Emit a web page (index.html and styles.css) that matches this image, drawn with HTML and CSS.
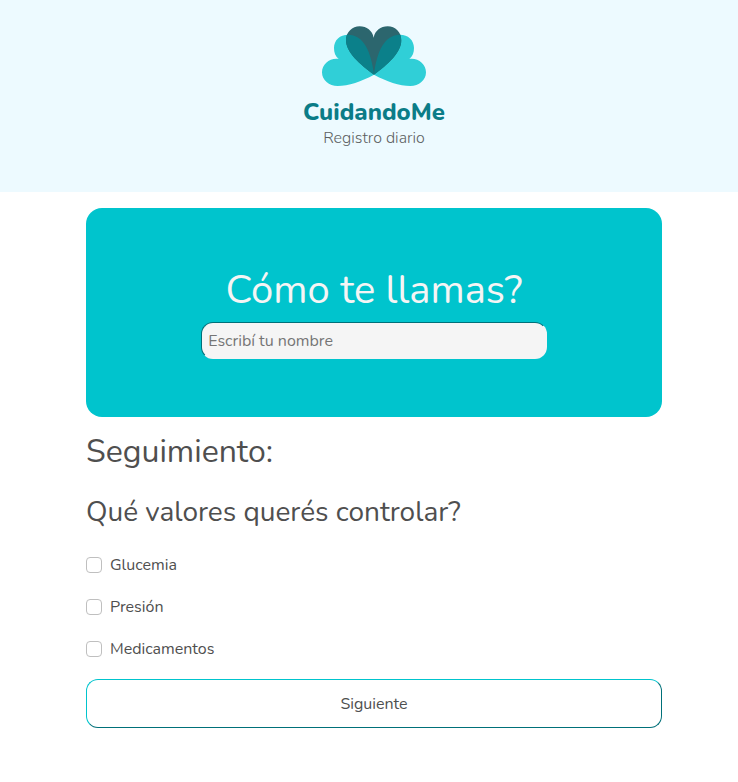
FILE: index.html
```html
<!DOCTYPE html>
<html lang="es">
<head>
  <meta charset="utf-8">
  <meta name="viewport" content="width=device-width, initial-scale=1">
  <title>CuidandoMe</title>
  <link rel="stylesheet" href="styles.css">
</head>
<body>
  <header class="header">
    <svg class="logo" viewBox="-3 0 390 204" aria-hidden="true">
      <defs>
        <path id="heart" d="M192 170C150 140 108 103 108 67C108 42 127 25 149 25C170 25 187 38 191 59C195 38 212 25 233 25C256 25 274 42 274 67C274 103 234 140 192 170Z"/>
        <path id="wing" d="M192 170C155 190 115 204 83 204C57 204 36 187 36 163C36 138 60 119 86 123C76 115 72 104 72 90C72 66 90 50 114 50C160 50 184 100 192 170Z"/>
        <clipPath id="heart-clip"><use href="#heart"/></clipPath>
      </defs>
      <g fill="#30cfd7">
        <use href="#wing"/>
        <use href="#wing" transform="translate(384 0) scale(-1 1)"/>
      </g>
      <use href="#heart" fill="#2c666e"/>
      <g fill="#0b808a" clip-path="url(#heart-clip)">
        <use href="#wing"/>
        <use href="#wing" transform="translate(384 0) scale(-1 1)"/>
      </g>
    </svg>
    <p class="brand">CuidandoMe</p>
    <p class="tagline">Registro diario</p>
  </header>
  <main>
    <form class="form">
      <section class="card">
        <label class="card-title" for="nombre">Cómo te llamas?</label>
        <input class="name-input" id="nombre" type="text" placeholder="Escribí tu nombre">
      </section>
      <h2 class="title">Seguimiento:</h2>
      <h3 class="subtitle">Qué valores querés controlar?</h3>
      <div class="options">
        <label class="option"><input class="check" type="checkbox">Glucemia</label>
        <label class="option"><input class="check" type="checkbox">Presión</label>
        <label class="option"><input class="check" type="checkbox">Medicamentos</label>
      </div>
      <button class="next" type="button">Siguiente</button>
    </form>
  </main>
</body>
</html>
```
FILE: styles.css
```css
* {
  box-sizing: border-box;
}

body {
  margin: 0;
  background: #fff;
  color: #4f4f4f;
  font: 16px/24px Nunito, Lato, sans-serif;
}

h2,
h3,
p {
  margin: 0;
  font-weight: 400;
}

.header {
  display: flex;
  flex-direction: column;
  align-items: center;
  padding: 18px 0 44px 10px;
  background: #edfaff;
}

.logo {
  width: 130px;
  height: 68px;
}

.brand {
  margin-top: 10px;
  color: #0b7c87;
  font-size: 24px;
  font-weight: 800;
  line-height: 32px;
}

.tagline {
  color: #5c5f61;
  font-size: 16px;
  font-weight: 300;
  line-height: 20px;
}

.form {
  display: flex;
  flex-direction: column;
  margin: 16px 76px 54px 86px;
}

.card {
  display: flex;
  flex-direction: column;
  align-items: center;
  padding: 58px 0;
  border-radius: 16px;
  background: #00c4cd;
}

.card-title {
  margin-bottom: 8px;
  color: #f5f5f5;
  font-size: 40px;
  line-height: 48px;
}

.name-input {
  width: 60%;
  height: 37px;
  padding: 0 6px;
  border: 1px solid transparent;
  border-top-color: #007079;
  border-left-color: #007079;
  border-radius: 12px;
  background: #f5f5f5;
  color: #4f4f4f;
  font: inherit;
}

.name-input::placeholder {
  color: #757575;
}

.title {
  margin-top: 15px;
  font-size: 32px;
  line-height: 40px;
}

.subtitle {
  margin-top: 24px;
  font-size: 28px;
  line-height: 32px;
}

.options {
  display: grid;
  gap: 18px;
  margin-top: 25px;
}

.option {
  display: flex;
  align-items: center;
  gap: 8px;
}

.check {
  appearance: none;
  width: 16px;
  height: 16px;
  margin: 0;
  border: 1px solid #bfbfbf;
  border-radius: 4px;
  background: #fff;
}

.check:checked {
  background: #00c4cd;
}

.next {
  height: 49px;
  margin-top: 18px;
  border: 1px solid #00c4cd;
  border-right-color: #007079;
  border-bottom-color: #007079;
  border-radius: 12px;
  background: #fff;
  color: #4f4f4f;
  font: inherit;
}
```
